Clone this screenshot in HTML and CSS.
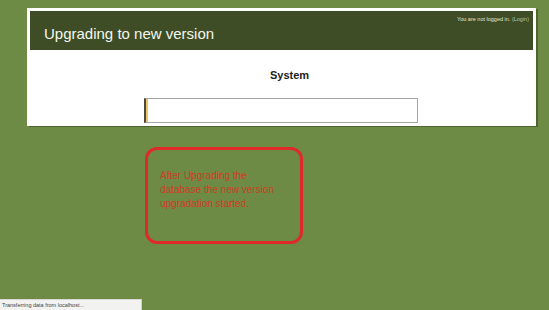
FILE: index.html
```html
<!DOCTYPE html>
<html>
<head>
<meta charset="utf-8">
<link rel="stylesheet" href="styles.css">
</head>
<body>
<div class="page">
  <div class="panel">
    <div class="header">
      <h1 class="title">Upgrading to new version</h1>
      <div class="login">You are not logged in. <span class="login-link">(Login)</span></div>
    </div>
    <div class="content">
      <div class="system">System</div>
      <div class="progress"><div class="progress-fill"></div></div>
    </div>
  </div>
  <div class="note">
    <p>After Upgrading the<br>database the new version<br>upgradation started.</p>
  </div>
</div>
<div class="status">Transferring data from localhost...</div>
</body>
</html>
```
FILE: styles.css
```css
html, body {
  margin: 0;
  padding: 0;
}
body {
  width: 549px;
  height: 310px;
  overflow: hidden;
  background: #6e8b46;
  font-family: "Liberation Sans", Arial, sans-serif;
  position: relative;
}
.page {
  padding: 8px 0 0 27px;
}
.panel {
  width: 503px;
  padding: 3px;
  background: #ffffff;
  box-shadow: 2px 1px 0 #4f6530;
}
.header {
  height: 39px;
  background: #3e4d25;
  display: flex;
  justify-content: space-between;
  align-items: flex-start;
}
.title {
  margin: 14px 0 0 14px;
  font-size: 15px;
  font-weight: normal;
  color: #f4f6ee;
  line-height: 17px;
}
.login {
  margin: 5px 4px 0 0;
  font-size: 5.5px;
  color: #e2e6d8;
  line-height: 7px;
}
.login-link {
  color: #b9c4a6;
}
.content {
  height: 73px;
  display: flex;
  flex-direction: column;
  align-items: center;
}
.system {
  margin-top: 19px;
  margin-left: 16px;
  font-size: 11px;
  font-weight: bold;
  color: #222;
  line-height: 13px;
}
.progress {
  margin-top: 16px;
  margin-left: -2px;
  width: 271px;
  height: 23px;
  border: 1px solid #a4a4a4;
  border-left: 2px solid #4e4a40;
  background: #fff;
  display: flex;
}
.progress-fill {
  width: 2px;
  background: #f0c46a;
}
.note {
  margin: 21px 0 0 118px;
  width: 152px;
  height: 91px;
  border: 3px solid #de2a28;
  border-radius: 12px;
}
.note p {
  margin: 19px 0 0 12px;
  white-space: nowrap;
  font-size: 10px;
  line-height: 14px;
  color: #cc3d24;
}
.status {
  position: absolute;
  left: 0;
  bottom: 0;
  width: 139px;
  height: 10px;
  padding-left: 2px;
  background: #f2f2f0;
  border-right: 1px solid #cfcfcf;
  border-top: 1px solid #d8d8d8;
  font-size: 5.5px;
  line-height: 10px;
  color: #444;
}
```
